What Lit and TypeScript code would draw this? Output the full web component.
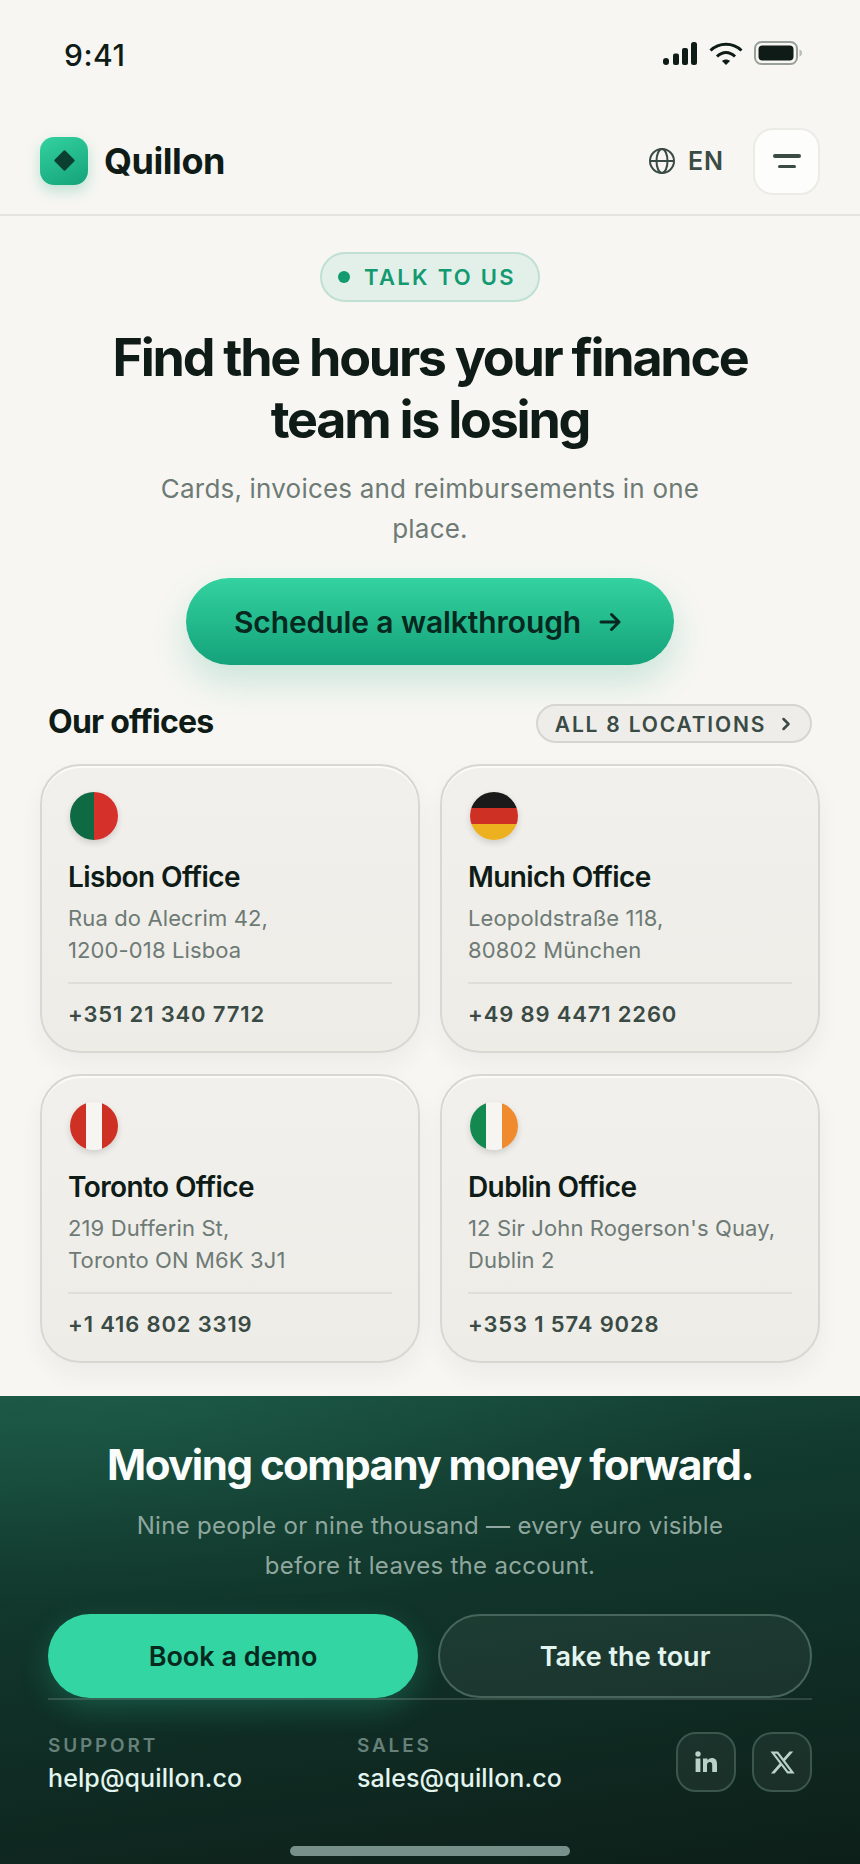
import { LitElement, html, css } from "lit"
import { customElement } from "lit/decorators.js"

const offices = [
  { flag: "pt", name: "Lisbon Office", lines: ["Rua do Alecrim 42,", "1200-018 Lisboa"], phone: "+351 21 340 7712" },
  { flag: "de", name: "Munich Office", lines: ["Leopoldstraße 118,", "80802 München"], phone: "+49 89 4471 2260" },
  { flag: "ca", name: "Toronto Office", lines: ["219 Dufferin St,", "Toronto ON M6K 3J1"], phone: "+1 416 802 3319" },
  { flag: "ie", name: "Dublin Office", lines: ["12 Sir John Rogerson's Quay,", "Dublin 2"], phone: "+353 1 574 9028" },
]

@customElement("app-root")
export class AppRoot extends LitElement {
  static styles = css`
    :host {
      display: block;
      width: 860px;
      height: 1864px;
      overflow: hidden;
      background: #f7f6f2;
      color: #0e1b16;
      font-family: Inter, "Liberation Sans", sans-serif;
    }
    .page {
      display: flex;
      flex-direction: column;
      height: 1864px;
    }

    /* status bar */
    .status {
      height: 108px;
      display: flex;
      justify-content: space-between;
      align-items: flex-start;
      padding: 0 57px 0 64px;
      box-sizing: border-box;
    }
    .time {
      margin-top: 38px;
      font-size: 30px;
      line-height: 34px;
      font-weight: 500;
      letter-spacing: 0.5px;
    }
    .status-icons {
      margin-top: 41px;
      display: flex;
      align-items: flex-start;
    }
    .signal { margin-right: 12px; }
    .wifi { margin-right: 11px; }

    /* header */
    .header {
      height: 108px;
      box-sizing: border-box;
      border-bottom: 2px solid #e5e4df;
      display: flex;
      align-items: center;
      justify-content: space-between;
      padding: 0 40px;
    }
    .brand {
      display: flex;
      align-items: center;
      gap: 16px;
      margin-top: -1px;
    }
    .logo {
      width: 48px;
      height: 48px;
      border-radius: 14px;
      background: linear-gradient(155deg, #33d29f, #14a27a);
      box-shadow: 0 6px 14px rgba(20, 162, 122, 0.25);
      display: flex;
      align-items: center;
      justify-content: center;
    }
    .logo i {
      width: 15px;
      height: 15px;
      background: #0b3f30;
      border-radius: 1px;
      transform: rotate(45deg);
    }
    .wordmark {
      font-size: 36px;
      font-weight: 700;
      letter-spacing: -0.45px;
    }
    .header-right {
      display: flex;
      align-items: center;
    }
    .lang {
      display: flex;
      align-items: center;
      gap: 12px;
      margin-right: 29px;
      font-size: 25px;
      font-weight: 600;
      letter-spacing: 1px;
      color: #3a4a44;
    }
    .menu {
      width: 67px;
      height: 67px;
      box-sizing: border-box;
      border: 2px solid #ecebe6;
      border-radius: 20px;
      background: #fdfdfb;
      display: flex;
      flex-direction: column;
      align-items: center;
      justify-content: center;
      gap: 7px;
    }
    .menu b {
      display: block;
      width: 28px;
      height: 4px;
      border-radius: 2px;
      background: #3a4a44;
    }
    .menu b + b {
      width: 18px;
      height: 3px;
    }

    /* hero */
    .hero {
      display: flex;
      flex-direction: column;
      align-items: center;
      padding-top: 36px;
    }
    .pill {
      height: 50px;
      box-sizing: border-box;
      width: 220px;
      padding-right: 6px;
      border: 2px solid #bfe0d2;
      border-radius: 25px;
      background: #e2f0e9;
      display: flex;
      align-items: center;
      justify-content: center;
      gap: 14px;
      font-size: 22px;
      font-weight: 600;
      letter-spacing: 2.3px;
      color: #139a70;
    }
    .pill i {
      width: 12px;
      height: 12px;
      border-radius: 50%;
      background: #139a70;
    }
    h1 {
      margin: 25px 0 0;
      font-size: 52px;
      line-height: 62px;
      font-weight: 700;
      letter-spacing: -2.26px;
      text-align: center;
      color: #0e1b16;
    }
    .sub {
      margin: 18px 0 0;
      width: 600px;
      font-size: 26px;
      line-height: 40px;
      color: #6e7a75;
      text-align: center;
      letter-spacing: 0.2px;
    }
    .cta {
      margin-top: 29px;
      width: 488px;
      height: 87px;
      box-sizing: border-box;
      padding-right: 4px;
      border-radius: 44px;
      background: linear-gradient(180deg, #33d29f, #14a27a);
      box-shadow: 0 16px 36px rgba(20, 162, 122, 0.2);
      display: flex;
      align-items: center;
      justify-content: center;
      gap: 17px;
      font-size: 30px;
      font-weight: 600;
      letter-spacing: -0.1px;
      color: #06281e;
    }

    /* offices */
    .offices {
      padding: 0 40px;
    }
    .offices-head {
      height: 39px;
      margin: 39px 8px 21px;
      display: flex;
      align-items: center;
      justify-content: space-between;
    }
    h2 {
      margin: -5px 0 0;
      font-size: 32px;
      font-weight: 700;
      letter-spacing: -0.75px;
    }
    .all {
      height: 39px;
      width: 276px;
      box-sizing: border-box;
      padding-right: 2px;
      border: 2px solid #d6d5cf;
      border-radius: 20px;
      background: #eeede9;
      display: flex;
      align-items: center;
      justify-content: center;
      gap: 15px;
      font-size: 21px;
      font-weight: 600;
      letter-spacing: 1.8px;
      color: #3a4a44;
    }
    .all span { margin-top: 1px; }
    .grid {
      display: grid;
      grid-template-columns: 380px 380px;
      gap: 21px 20px;
    }
    .card {
      height: 289px;
      box-sizing: border-box;
      border: 2px solid #d8d7d1;
      border-radius: 40px;
      background: linear-gradient(180deg, #f1f0ec, #edece7);
      box-shadow: 0 12px 24px rgba(30, 40, 35, 0.05), inset 0 2px 0 rgba(255, 255, 255, 0.7);
      padding: 26px 26px 0 26px;
    }
    .flag {
      width: 48px;
      height: 48px;
      margin-left: 2px;
      border-radius: 50%;
      box-shadow: 0 3px 6px rgba(30, 40, 35, 0.16);
    }
    .flag.pt { background: linear-gradient(90deg, #0e6a42 50%, #d6302b 50%); }
    .flag.de { background: linear-gradient(180deg, #1a1a1a 33.3%, #cf3024 33.3%, #cf3024 66.6%, #edb01f 66.6%); }
    .flag.ca { background: linear-gradient(90deg, #cf3024 33.3%, #f6f5f1 33.3%, #f6f5f1 66.6%, #cf3024 66.6%); }
    .flag.ie { background: linear-gradient(90deg, #14894f 33.3%, #f6f5f1 33.3%, #f6f5f1 66.6%, #ef8a2e 66.6%); }
    .name {
      margin-top: 20px;
      font-size: 28px;
      line-height: 34px;
      font-weight: 600;
      letter-spacing: -0.6px;
    }
    .addr {
      margin-top: 8px;
      font-size: 22px;
      line-height: 32px;
      color: #6e7a75;
      letter-spacing: 0.12px;
      white-space: nowrap;
    }
    .phone {
      margin-top: 16px;
      border-top: 2px solid #dfded9;
      padding-top: 15px;
      font-size: 22px;
      line-height: 30px;
      font-weight: 600;
      letter-spacing: 0.85px;
      color: #3a4a44;
    }

    /* footer band */
    .band {
      margin-top: 33px;
      flex: 1;
      position: relative;
      background:
        radial-gradient(ellipse 70% 220px at 15% 0, rgba(34, 110, 86, 0.35), transparent),
        linear-gradient(172deg, #1a5040 0%, #123a2e 28%, #0f2a22 70%, #0d1f19 100%);
      padding: 0 48px;
      display: flex;
      flex-direction: column;
      align-items: center;
    }
    .band h3 {
      margin: 41px 0 0;
      font-size: 42px;
      line-height: 56px;
      font-weight: 700;
      letter-spacing: -1.5px;
      color: #fbfdfc;
      text-align: center;
    }
    .band p {
      margin: 13px 0 0;
      font-size: 24px;
      line-height: 40px;
      letter-spacing: 0.3px;
      color: #8fa79e;
      text-align: center;
    }
    .actions {
      margin-top: 28px;
      align-self: stretch;
      display: flex;
      gap: 20px;
      height: 84px;
    }
    .btn {
      border-radius: 42px;
      box-sizing: border-box;
      display: flex;
      align-items: center;
      justify-content: center;
      font-size: 27px;
      font-weight: 600;
    }
    .btn.primary {
      width: 370px;
      background: #33d5a2;
      color: #06281e;
      box-shadow: 0 10px 30px rgba(51, 213, 162, 0.24);
    }
    .btn.ghost {
      flex: 1;
      border: 2px solid #47655b;
      background: rgba(255, 255, 255, 0.05);
      color: #e3f5ee;
    }
    .contact {
      position: relative;
      align-self: stretch;
      border-top: 2px solid rgba(255, 255, 255, 0.14);
      padding-top: 33px;
      display: flex;
      align-items: flex-start;
    }
    .col { width: 309px; }
    .col small {
      display: block;
      font-size: 19px;
      line-height: 26px;
      font-weight: 600;
      letter-spacing: 2.8px;
      color: #66807a;
    }
    .col span {
      display: block;
      margin-top: 2px;
      font-size: 25px;
      line-height: 34px;
      font-weight: 500;
      letter-spacing: 0.1px;
      color: #e3f5ee;
    }
    .social {
      margin-left: auto;
      margin-top: -1px;
      display: flex;
      gap: 16px;
    }
    .social div {
      width: 60px;
      height: 60px;
      box-sizing: border-box;
      border: 2px solid #3b574d;
      border-radius: 20px;
      background: rgba(255, 255, 255, 0.05);
      display: flex;
      align-items: center;
      justify-content: center;
    }
    .home {
      position: absolute;
      left: 290px;
      bottom: 8px;
      width: 280px;
      height: 10px;
      border-radius: 5px;
      background: #77908a;
    }
  `

  render() {
    return html`
      <div class="page">
        <div class="status">
          <span class="time">9:41</span>
          <div class="status-icons">
            <svg class="signal" width="36" height="24" viewBox="0 0 36 24" fill="#0e1b16">
              <rect x="2" y="17" width="6" height="7" rx="3" />
              <rect x="12" y="12.500" width="6" height="11.500" rx="2" />
              <rect x="21" y="7" width="6" height="17" rx="2" />
              <rect x="30" y="1" width="6" height="23" rx="2.500" />
            </svg>
            <svg class="wifi" width="34" height="24" viewBox="0 0 34 24" fill="none" stroke="#0e1b16" stroke-width="3">
              <path d="M1.500 9.500C10 1 24 1 32.500 9.500" />
              <path d="M8 15.500C13.500 10 20.500 10 26 15.500" />
              <path d="M13 20 17 24 21 20C19 18 15 18 13 20Z" fill="#0e1b16" stroke="none" />
            </svg>
            <svg width="49" height="24" viewBox="0 0 49 24">
              <rect x="1" y="1" width="42" height="22" rx="6.500" fill="none" stroke="#98a09c" stroke-width="2" />
              <rect x="4.500" y="4.500" width="35" height="15" rx="4" fill="#0e1b16" />
              <path d="M45.500 8.500c1.800.6 2.500 1.800 2.500 3.500s-.7 2.900-2.500 3.500Z" fill="#b8bdba" />
            </svg>
          </div>
        </div>

        <header class="header">
          <div class="brand">
            <div class="logo"><i></i></div>
            <span class="wordmark">Quillon</span>
          </div>
          <div class="header-right">
            <div class="lang">
              <svg width="28" height="28" viewBox="0 0 28 28" fill="none" stroke="#3a4a44" stroke-width="2">
                <circle cx="14" cy="14" r="12" />
                <ellipse cx="14" cy="14" rx="5.500" ry="12" />
                <path d="M2 14H26" />
              </svg>
              EN
            </div>
            <div class="menu"><b></b><b></b></div>
          </div>
        </header>

        <section class="hero">
          <div class="pill"><i></i>TALK TO US</div>
          <h1>Find the hours your finance<br />team is losing</h1>
          <p class="sub">Cards, invoices and reimbursements in one place.</p>
          <div class="cta">
            Schedule a walkthrough
            <svg width="24" height="22" viewBox="0 0 24 22" fill="none" stroke="#06281e" stroke-width="3" stroke-linecap="round" stroke-linejoin="round">
              <path d="M3 11H21M13.500 3.500 21 11 13.500 18.500" />
            </svg>
          </div>
        </section>

        <section class="offices">
          <div class="offices-head">
            <h2>Our offices</h2>
            <div class="all">
              <span>ALL 8 LOCATIONS</span>
              <svg width="10" height="14" viewBox="0 0 10 14" fill="none" stroke="#3a4a44" stroke-width="2.500" stroke-linecap="round" stroke-linejoin="round">
                <path d="M2.500 2 7.500 7 2.500 12" />
              </svg>
            </div>
          </div>
          <div class="grid">
            ${offices.map(
              (o) => html`
                <article class="card">
                  <div class="flag ${o.flag}"></div>
                  <div class="name">${o.name}</div>
                  <div class="addr">${o.lines[0]}<br />${o.lines[1]}</div>
                  <div class="phone">${o.phone}</div>
                </article>
              `,
            )}
          </div>
        </section>

        <section class="band">
          <h3>Moving company money forward.</h3>
          <p>Nine people or nine thousand — every euro visible<br />before it leaves the account.</p>
          <div class="actions">
            <div class="btn primary">Book a demo</div>
            <div class="btn ghost">Take the tour</div>
          </div>
          <div class="contact">
            <div class="col"><small>SUPPORT</small><span>help@quillon.co</span></div>
            <div class="col"><small>SALES</small><span>sales@quillon.co</span></div>
            <div class="social">
              <div>
                <svg width="24" height="24" viewBox="0 0 24 24" fill="#b9d2c9">
                  <circle cx="4" cy="4" r="2.700" />
                  <rect x="1.600" y="8.500" width="4.800" height="13.500" />
                  <path d="M9 8.500h4.500v2c.9-1.500 2.500-2.400 4.300-2.400 3.600 0 5.200 2.200 5.200 6V22h-4.800v-7c0-1.900-.7-3-2.300-3-1.700 0-2.900 1.200-2.900 3.200V22H9Z" />
                </svg>
              </div>
              <div>
                <svg width="27" height="27" viewBox="0 0 24 24" fill="#b9d2c9">
                  <path d="M18.240 2.250h3.310l-7.230 8.260 8.500 11.240H16.170l-5.210-6.820L4.990 21.750H1.680l7.730-8.830L1.250 2.250H8.080l4.710 6.230 5.450-6.230Zm-1.160 17.520h1.830L7.080 4.130H5.120L17.080 19.770Z" />
                </svg>
              </div>
            </div>
          </div>
          <div class="home"></div>
        </section>
      </div>
    `
  }
}
